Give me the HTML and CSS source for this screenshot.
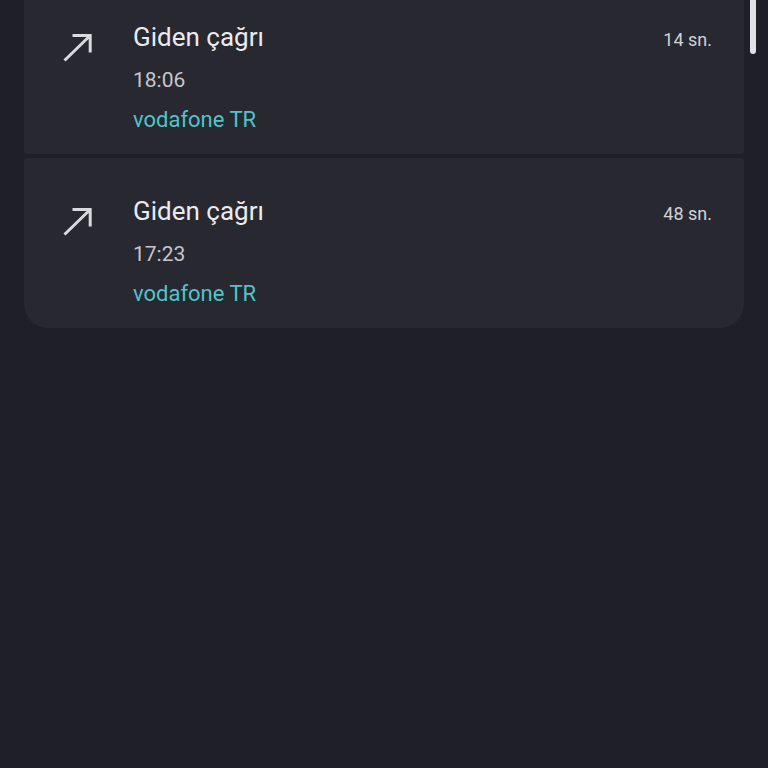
FILE: index.html
```html
<!DOCTYPE html>
<html lang="tr">

<head>
    <meta charset="UTF-8">
    <meta name="viewport" content="width=device-width, initial-scale=1.0">
    <title>Arama geçmişi</title>
    <link rel="stylesheet" href="styles.css">
</head>

<body>

    <div class="call-list">
        <div class="call-card first">
            <div class="call-icon">
                <svg viewBox="0 0 36 36" width="36" height="36">
                    <path d="M12.5 5.5H30.2V22.5M30.2 5.5L4.5 30.5" />
                </svg>
            </div>
            <div class="call-info">
                <div class="call-head">
                    <span class="call-type">Giden çağrı</span>
                    <span class="call-duration">14 sn.</span>
                </div>
                <div class="call-time">18:06</div>
                <div class="call-sim">vodafone TR</div>
            </div>
        </div>
        <div class="call-card last">
            <div class="call-icon">
                <svg viewBox="0 0 36 36" width="36" height="36">
                    <path d="M12.5 5.5H30.2V22.5M30.2 5.5L4.5 30.5" />
                </svg>
            </div>
            <div class="call-info">
                <div class="call-head">
                    <span class="call-type">Giden çağrı</span>
                    <span class="call-duration">48 sn.</span>
                </div>
                <div class="call-time">17:23</div>
                <div class="call-sim">vodafone TR</div>
            </div>
        </div>
    </div>

    <div class="scrollbar"></div>

</body>

</html>
```

FILE: styles.css
```css
body {
    font-family: Roboto, "Liberation Sans", sans-serif;
    background-color: #1e1f27;
    margin: 0;
    height: 100vh;
    overflow: hidden;
}

.call-list {
    display: flex;
    flex-direction: column;
    gap: 4px;
    padding: 0 24px;
    margin-top: -16px;
}

.call-card {
    display: flex;
    background-color: #272830;
    border-radius: 4px;
    padding: 33px 32px 14px 36px;
}

.call-card.last {
    border-radius: 4px 4px 24px 24px;
}

.call-icon {
    width: 36px;
    height: 36px;
    margin-top: 13px;
    margin-right: 37px;
}

.call-icon svg {
    display: block;
    fill: none;
    stroke: #d9d9de;
    stroke-width: 3;
}

.call-info {
    flex: 1;
}

.call-head {
    display: flex;
    justify-content: space-between;
    align-items: baseline;
    height: 40px;
    line-height: 40px;
}

.call-type {
    font-size: 26px;
    color: #ebebef;
}

.call-duration {
    font-size: 18px;
    color: #d2d2d7;
}

.call-time {
    font-size: 21px;
    line-height: 40px;
    margin-top: 3px;
    color: #c6c6cc;
}

.call-sim {
    font-size: 22px;
    line-height: 40px;
    color: #52c3ca;
}

/* overlay scroll indicator */
.scrollbar {
    position: absolute;
    top: 0;
    left: 750px;
    width: 6px;
    height: 54px;
    border-radius: 0 0 3px 3px;
    background-color: #e2e2e6;
}
```
